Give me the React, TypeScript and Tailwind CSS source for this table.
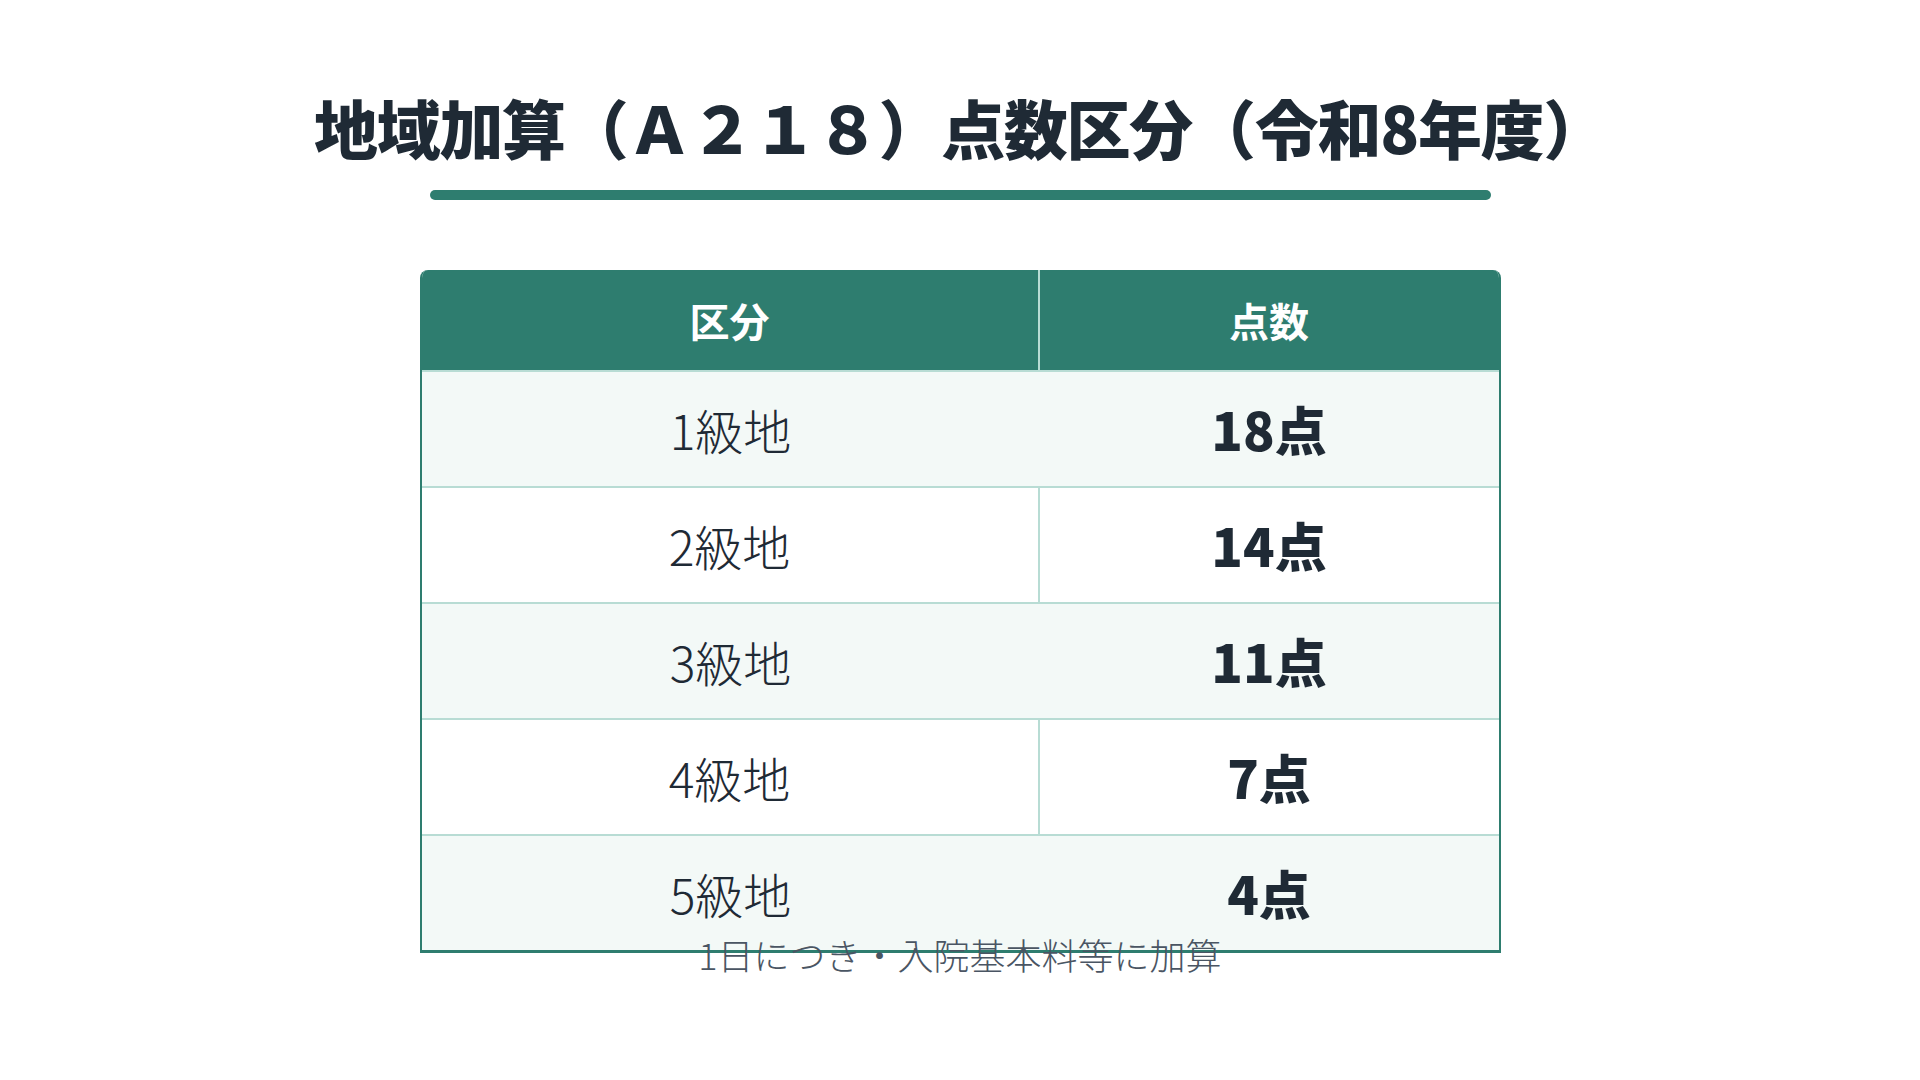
const rows = [
  { area: "1級地", points: "18点" },
  { area: "2級地", points: "14点" },
  { area: "3級地", points: "11点" },
  { area: "4級地", points: "7点" },
  { area: "5級地", points: "4点" },
];

const App = () => {
  return (
    <div className="min-h-screen bg-white flex flex-col items-center pt-[88px] font-['Noto_Sans_CJK_JP','Noto_Sans',sans-serif] text-[#1f2a35]">
      <h1 className="text-[64px] font-black leading-[1.2] tracking-[-0.02em] whitespace-nowrap">
        地域加算（Ａ２１８）点数区分（令和8年度）
      </h1>
      <div className="mt-[25px] h-[10px] w-[1061px] rounded-full bg-[#2e7d6f]" />

      {/* table */}
      <div className="mt-[70px] w-[1081px] rounded-t-lg overflow-hidden border-x-2 border-b-[3px] border-[#2e7d6f]">
        <div className="grid grid-cols-[618px_1fr] h-[100px] bg-[#2e7d6f] text-white text-[40px] font-bold">
          <div className="flex items-center justify-center border-r-2 border-[#b8dcd4]">区分</div>
          <div className="flex items-center justify-center">点数</div>
        </div>
        {rows.map((row, i) => (
          <div
            key={row.area}
            className={
              i % 2 === 0
                ? "grid grid-cols-[618px_1fr] h-[116px] border-t-2 border-[#b8dcd4] bg-[#f3f9f7]"
                : "grid grid-cols-[618px_1fr] h-[116px] border-t-2 border-[#b8dcd4] bg-white"
            }
          >
            <div
              className={
                i % 2 === 0
                  ? "flex items-center justify-center text-[48px] font-light"
                  : "flex items-center justify-center text-[48px] font-light border-r-2 border-[#b8dcd4]"
              }
            >
              {row.area}
            </div>
            <div className="flex items-center justify-center text-[52px] font-black">{row.points}</div>
          </div>
        ))}
      </div>
      <p className="-mt-[24px] text-[36px] leading-[1.4] font-light text-[#4a5563]">1日につき・入院基本料等に加算</p>
    </div>
  );
};

export default App;
